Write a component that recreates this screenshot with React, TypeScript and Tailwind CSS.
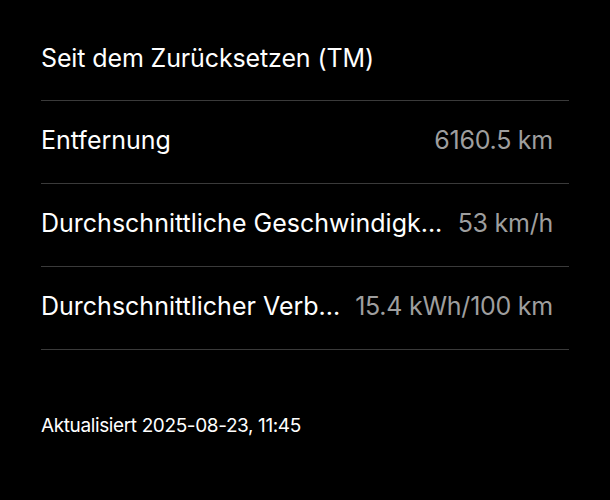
const rows = [
  { label: "Entfernung", value: "6160.5 km" },
  { label: "Durchschnittliche Geschwindigk...", value: "53 km/h" },
  { label: "Durchschnittlicher Verb...", value: "15.4 kWh/100 km" },
];

export default function App() {
  return (
    <div
      className="h-[500px] w-[610px] bg-black px-[41px] text-white"
      style={{ fontFamily: "Inter, 'Noto Sans', sans-serif" }}
    >
      <div className="flex h-[101px] items-start border-b border-[#3a3a3a] pt-[42px]">
        <h1 className="text-[25px] leading-8 tracking-[-0.005em]">Seit dem Zurücksetzen (TM)</h1>
      </div>
      {rows.map((row) => (
        <div
          key={row.label}
          className="flex h-[83px] items-center justify-between gap-3 border-b border-[#3a3a3a] pr-4 pb-[4px]"
        >
          <span className="whitespace-nowrap text-[25px] leading-8">{row.label}</span>
          <span className="shrink-0 whitespace-nowrap text-[25px] leading-8 tracking-[-0.01em] text-[#9e9e9e]">
            {row.value}
          </span>
        </div>
      ))}
      <p className="mt-[64px] text-[19px] leading-6 tracking-[-0.02em]">
        Aktualisiert 2025-08-23, 11:45
      </p>
    </div>
  );
}
